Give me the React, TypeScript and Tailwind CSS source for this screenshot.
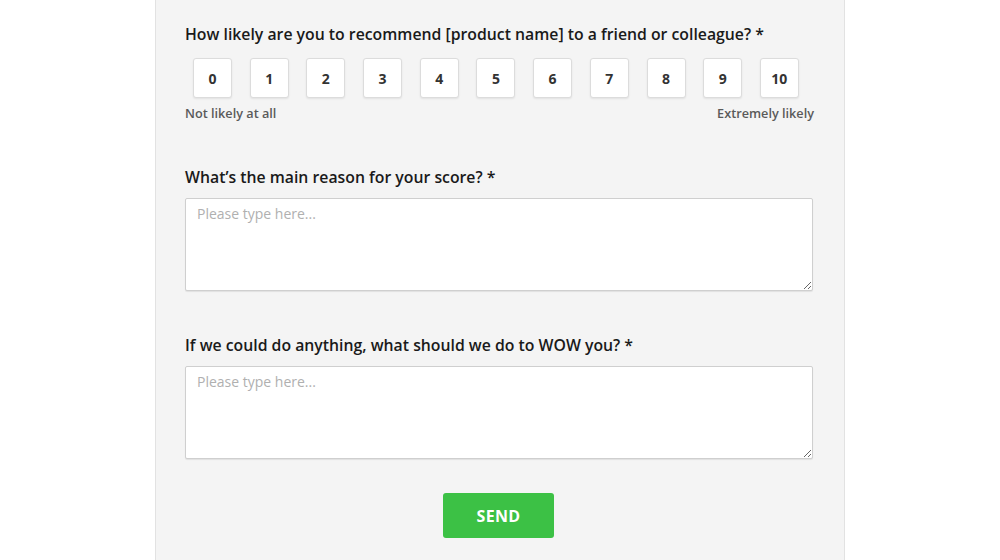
import React from 'react';

const SCORES = [0, 1, 2, 3, 4, 5, 6, 7, 8, 9, 10];

const Question = ({ children, className = '' }: { children: React.ReactNode; className?: string }) => (
  <p className={`text-[15.8px] leading-[20px] font-semibold text-[#1a1a1a] ${className}`}>{children}</p>
);

const App: React.FC = () => {
  return (
    <div className="w-[1000px] h-[560px] bg-white overflow-hidden" style={{ fontFamily: '"Open Sans", "Liberation Sans", sans-serif' }}>
      <div className="ml-[155px] w-[690px] h-full bg-[#f4f4f4] border-x border-[#e2e2e2] pl-[29px] pr-[30px] pt-[24px]">
        {/* NPS question */}
        <Question>How likely are you to recommend [product name] to a friend or colleague? *</Question>
        <div className="flex justify-between pl-[8px] pr-[15px] mt-[14px]">
          {SCORES.map(n => (
            <button
              key={n}
              className="w-[39px] h-[40px] bg-white border border-[#dcdcdc] rounded-[3px] shadow-[0_1px_2px_rgba(0,0,0,0.08)] text-[14px] font-bold text-[#333] flex items-center justify-center"
            >
              {n}
            </button>
          ))}
        </div>
        <div className="flex justify-between mt-[7px] text-[12.7px] leading-[16px] font-semibold text-[#5a5a5a]">
          <span>Not likely at all</span>
          <span>Extremely likely</span>
        </div>

        {/* Reason */}
        <Question className="mt-[46px]">What’s the main reason for your score? *</Question>
        <textarea
          placeholder="Please type here..."
          className="mt-[11px] block w-[628px] h-[93px] bg-white border border-[#cfcfcf] rounded-[2px] shadow-[0_1px_1px_rgba(0,0,0,0.08)] px-[11px] py-[6px] text-[14px] leading-[18px] text-[#333] placeholder:text-[#b0b0b0] outline-none"
        />

        {/* WOW */}
        <Question className="mt-[44px]">If we could do anything, what should we do to WOW you? *</Question>
        <textarea
          placeholder="Please type here..."
          className="mt-[11px] block w-[628px] h-[93px] bg-white border border-[#cfcfcf] rounded-[2px] shadow-[0_1px_1px_rgba(0,0,0,0.08)] px-[11px] py-[6px] text-[14px] leading-[18px] text-[#333] placeholder:text-[#b0b0b0] outline-none"
        />

        <div className="flex justify-center mt-[34px] pr-[2px]">
          <button className="w-[111px] h-[45px] bg-[#3cc145] rounded-[3px] text-white text-[16px] font-bold tracking-[0.3px]">
            SEND
          </button>
        </div>
      </div>
    </div>
  );
};

export default App;
